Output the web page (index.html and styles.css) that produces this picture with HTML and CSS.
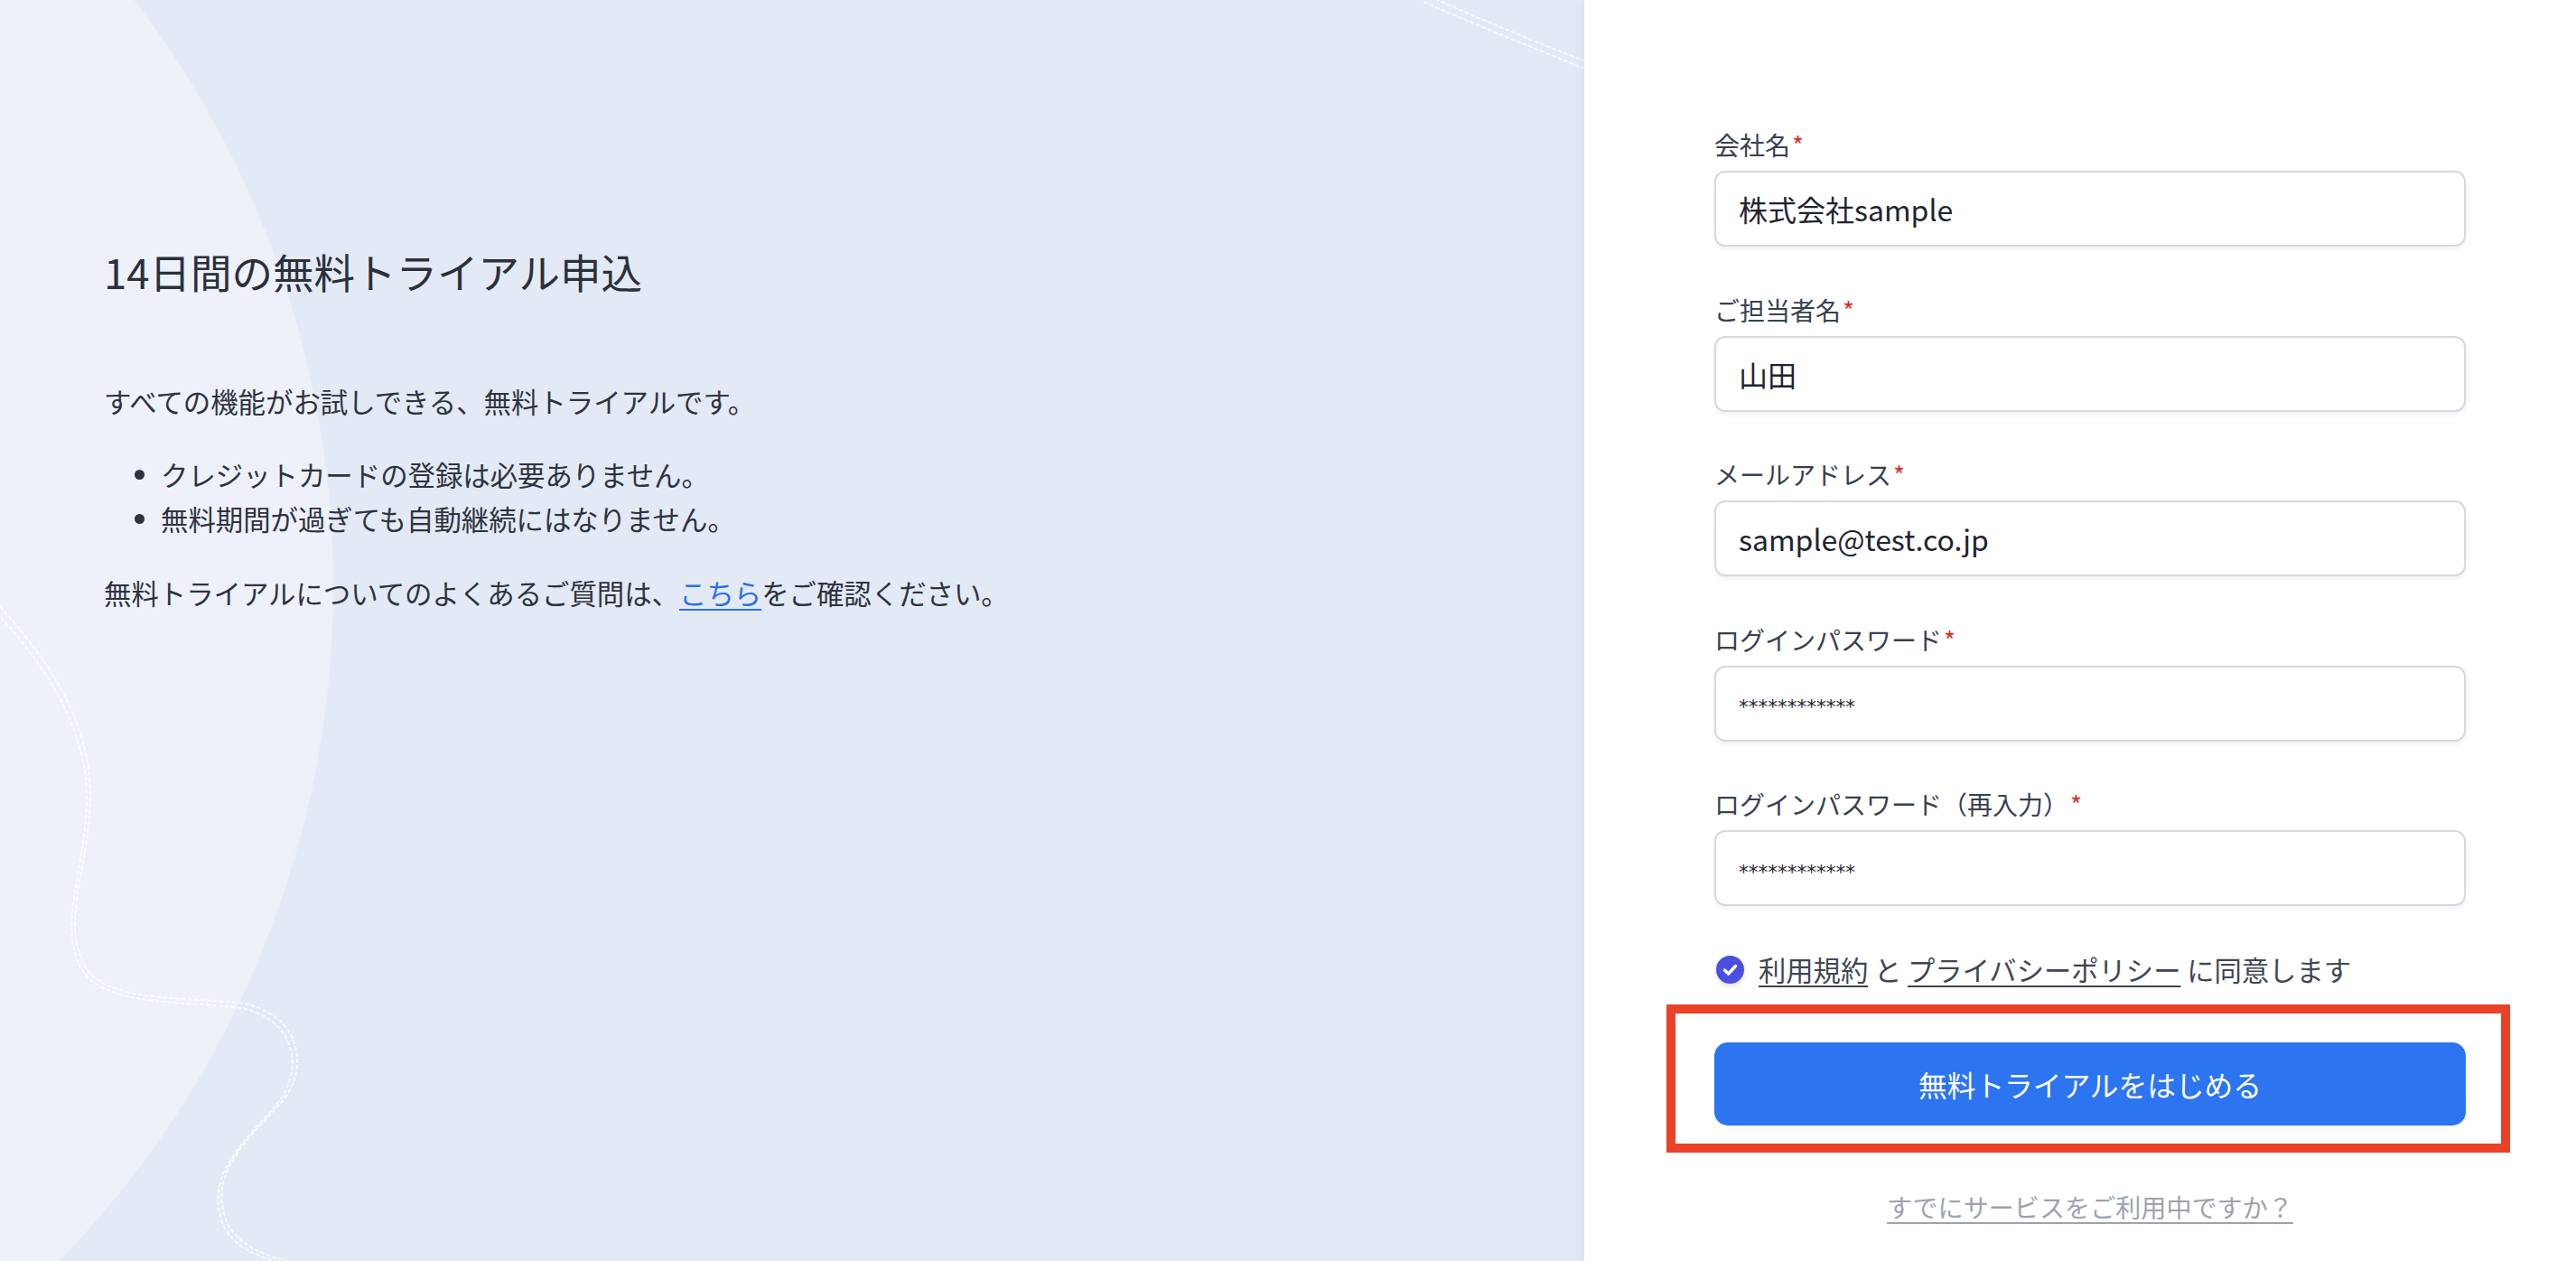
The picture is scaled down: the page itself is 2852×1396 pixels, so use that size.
FILE: index.html
```html
<!DOCTYPE html>
<html lang="ja">
<head>
  <meta charset="UTF-8" />
  <meta name="viewport" content="width=device-width, initial-scale=1.0" />
  <title>14日間の無料トライアル申込</title>
  <link rel="stylesheet" href="styles.css">
</head>
<body>
  <main class="signup">
    <section class="intro">
      <svg class="intro-lines" width="1754" height="1396" viewBox="0 0 1754 1396" aria-hidden="true">
        <path d="M1583 -4 C1640 22, 1700 46, 1760 70" />
        <path d="M1576 2 C1635 28, 1695 52, 1760 78" />
        <path d="M0 672 C40 715, 100 790, 100 880 C100 960, 62 1030, 100 1078 C130 1108, 200 1104, 262 1110 C332 1118, 346 1182, 310 1222 C270 1265, 232 1300, 250 1350 C264 1388, 320 1398, 360 1404" />
        <path d="M-4 678 C36 721, 96 796, 96 882 C96 964, 58 1034, 97 1082 C128 1112, 198 1109, 260 1115 C326 1123, 340 1184, 305 1224 C266 1268, 228 1303, 246 1353 C260 1391, 316 1401, 356 1408" />
      </svg>
      <div class="intro-body">
        <h1 class="intro-title">14日間の無料トライアル申込</h1>
        <p class="intro-text lead">すべての機能がお試しできる、無料トライアルです。</p>
        <ul class="intro-points">
          <li>クレジットカードの登録は必要ありません。</li>
          <li>無料期間が過ぎても自動継続にはなりません。</li>
        </ul>
        <p class="intro-text">無料トライアルについてのよくあるご質問は、<a class="intro-link" href="#">こちら</a>をご確認ください。</p>
      </div>
    </section>

    <section class="form-panel">
      <form class="trial-form">
        <div class="field">
          <label class="field-label">会社名<span class="req">*</span></label>
          <input class="field-input" type="text" value="株式会社sample">
        </div>
        <div class="field">
          <label class="field-label">ご担当者名<span class="req">*</span></label>
          <input class="field-input" type="text" value="山田">
        </div>
        <div class="field">
          <label class="field-label">メールアドレス<span class="req">*</span></label>
          <input class="field-input" type="text" value="sample@test.co.jp">
        </div>
        <div class="field">
          <label class="field-label">ログインパスワード<span class="req">*</span></label>
          <input class="field-input secret" type="text" value="************">
        </div>
        <div class="field">
          <label class="field-label">ログインパスワード（再入力）<span class="req">*</span></label>
          <input class="field-input secret" type="text" value="************">
        </div>

        <div class="agree">
          <span class="check">
            <svg width="31" height="31" viewBox="0 0 31 31" aria-hidden="true">
              <circle cx="15.5" cy="15.5" r="15.5" fill="#4b4fdf" />
              <path d="M9.5 16 L13.6 20 L21.5 11.5" fill="none" stroke="#fff" stroke-width="3.4" stroke-linecap="round" stroke-linejoin="round" />
            </svg>
          </span>
          <span class="agree-text"><a href="#">利用規約</a> と <a href="#">プライバシーポリシー</a> に同意します</span>
        </div>

        <div class="highlight">
          <button class="submit" type="button">無料トライアルをはじめる</button>
        </div>

        <a class="signin-link" href="#">すでにサービスをご利用中ですか？</a>
      </form>
    </section>
  </main>
</body>
</html>
```

FILE: styles.css
```css
* {
  box-sizing: border-box;
  margin: 0;
  padding: 0;
}

body {
  font-family: "Noto Sans CJK JP", "Noto Sans", sans-serif;
  color: #2e3340;
  background: #fff;
  height: 100vh;
  overflow: hidden;
}

.signup {
  display: flex;
  height: 100vh;
}

/* left side */

.intro {
  position: relative;
  width: 1754px;
  flex-shrink: 0;
  overflow: hidden;
  background:
    radial-gradient(circle 1070px at -700px 650px, #eef1fa 99.8%, transparent 100%),
    #e3e9f5;
}

.intro-lines {
  position: absolute;
  top: 0;
  left: 0;
  pointer-events: none;
}

.intro-lines path {
  fill: none;
  stroke: rgba(255, 255, 255, 0.75);
  stroke-width: 2;
  stroke-dasharray: 5 2;
}

.intro-body {
  position: relative;
  padding: 268px 0 0 115px;
}

.intro-title {
  font-size: 45.5px;
  font-weight: 400;
  line-height: 64px;
  color: #2b303b;
}

.intro-text {
  font-size: 30.4px;
  line-height: 49px;
}

.intro-text.lead {
  margin-top: 88px;
}

.intro-points {
  list-style: none;
  margin: 32px 0 33px;
  padding-left: 34px;
  font-size: 30.4px;
  line-height: 49px;
}

.intro-points li {
  display: flex;
  align-items: center;
}

.intro-points li::before {
  content: "";
  width: 11px;
  height: 11px;
  border-radius: 50%;
  background: #2e3340;
  margin-right: 18px;
  flex-shrink: 0;
}

.intro-link {
  color: #2f6fe6;
  text-decoration: underline;
  text-underline-offset: 5px;
  text-decoration-thickness: 2px;
}

/* right side */

.form-panel {
  position: relative;
  flex: 1;
  background: #fff;
  box-shadow: -3px 0 10px rgba(60, 70, 100, 0.06);
}

.trial-form {
  width: 832px;
  margin-left: 144px;
  padding-top: 140px;
  display: flex;
  flex-direction: column;
}

.field {
  display: flex;
  flex-direction: column;
  margin-bottom: 49.5px;
}

.field:nth-of-type(5) {
  margin-bottom: 50px;
}

.field-label {
  font-size: 28px;
  line-height: 40px;
  color: #374151;
  margin-bottom: 9px;
}

.req {
  color: #dc2f2f;
  margin-left: 2px;
}

.field-input {
  height: 84px;
  width: 100%;
  border: 2px solid #d5d9e0;
  border-radius: 12px;
  padding: 0 25px;
  font-family: "Noto Sans CJK JP", "Noto Sans", sans-serif;
  font-size: 32px;
  color: #1f2430;
  background: #fff;
  box-shadow: 0 3px 5px rgba(30, 40, 60, 0.06);
  outline: none;
}

.field-input.secret {
  font-family: "DejaVu Sans", sans-serif;
  font-size: 21.5px;
  padding-top: 8px;
  color: #1f2430;
}

.agree {
  display: flex;
  align-items: center;
  height: 40px;
  padding-left: 2px;
  font-size: 30.3px;
  color: #3f4654;
}

.check {
  display: flex;
  width: 31px;
  height: 31px;
  border-radius: 50%;
  box-shadow: 0 2px 5px rgba(60, 60, 140, 0.18);
  margin-right: 16px;
}

.agree-text a {
  color: #3f4654;
  text-decoration: underline;
  text-underline-offset: 5px;
  text-decoration-thickness: 2px;
}

.highlight {
  margin: 19px 0 0 -53px;
  width: 934px;
  border: 10px solid #ea4127;
  padding: 32px 39px 20px 43px;
}

.submit {
  display: block;
  width: 832px;
  height: 92px;
  border: none;
  border-radius: 15px;
  background: #2d74f1;
  color: #fff;
  font-family: "Noto Sans CJK JP", "Noto Sans", sans-serif;
  font-size: 31.7px;
  cursor: pointer;
}

.signin-link {
  align-self: center;
  margin-top: 40px;
  font-size: 28.1px;
  line-height: 40px;
  color: #9ca3af;
  text-decoration: underline;
  text-underline-offset: 5px;
  text-decoration-thickness: 2px;
}
```
